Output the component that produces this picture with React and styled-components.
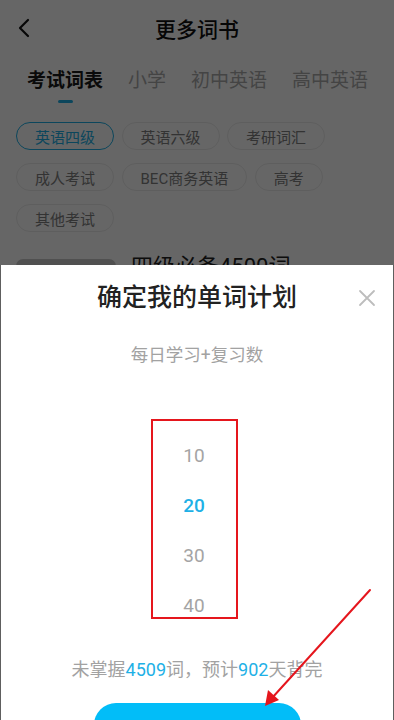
import React from "react";
import styled, { createGlobalStyle } from "styled-components";

const Global = createGlobalStyle`
  html, body { margin: 0; padding: 0; width: 394px; height: 720px; overflow: hidden; background: #fff; }
  body { font-family: Roboto, "Noto Sans CJK SC", "Noto Sans", sans-serif; }
  * { box-sizing: border-box; }
`;

const Page = styled.div`
  width: 394px;
  height: 720px;
  background: #fff;
  display: flex;
  flex-direction: column;
`;

const Header = styled.div`
  height: 56px;
  flex-shrink: 0;
  display: flex;
  align-items: center;
  justify-content: center;
  position: relative;
`;

const BackBtn = styled.div`
  position: absolute;
  left: 14px;
  top: 16px;
  width: 20px;
  height: 24px;
  display: flex;
  align-items: center;
  justify-content: center;
`;

const HeaderTitle = styled.div`
  font-size: 21px;
  font-weight: 500;
  color: #111;
`;

const Tabs = styled.div`
  display: flex;
  align-items: flex-start;
  padding: 12px 0 0 27px;
  gap: 25px;
  flex-shrink: 0;
`;

const Tab = styled.div`
  display: flex;
  flex-direction: column;
  align-items: center;
  font-size: 19px;
  line-height: 26px;
  font-weight: ${(p) => (p.$active ? 600 : 400)};
  color: ${(p) => (p.$active ? "#1a1a1a" : "#ababab")};
  white-space: nowrap;
`;

const Indicator = styled.div`
  margin-top: 6px;
  width: 15px;
  height: 3px;
  border-radius: 2px;
  background: ${(p) => (p.$show ? "#1eb0e6" : "transparent")};
`;

const Chips = styled.div`
  display: flex;
  flex-wrap: wrap;
  padding: 19px 16px 0;
  row-gap: 13px;
  column-gap: 7.5px;
  flex-shrink: 0;
`;

const Chip = styled.div`
  height: 28px;
  padding: 0 18px;
  border-radius: 14px;
  border: 1.5px solid ${(p) => (p.$active ? "#1eb0e6" : "#ececec")};
  color: ${(p) => (p.$active ? "#1eb0e6" : "#808080")};
  font-size: 15px;
  display: flex;
  align-items: center;
  justify-content: center;
  white-space: nowrap;
`;

const BookRow = styled.div`
  display: flex;
  gap: 15px;
  padding: 27px 16px 0;
  flex-shrink: 0;
`;

const Thumb = styled.div`
  width: 100px;
  height: 130px;
  border-radius: 7px;
  background: #c9c9c9;
`;

const BookName = styled.div`
  font-size: 22px;
  color: #222;
  line-height: 26px;
  margin-top: -5px;
`;

const Overlay = styled.div`
  position: fixed;
  inset: 0;
  background: rgba(0, 0, 0, 0.6);
  display: flex;
  flex-direction: column;
`;

const Spacer = styled.div`
  flex: 0 0 265px;
`;

const Sheet = styled.div`
  flex: 1;
  background: #fff;
  border-left: 1.5px solid #5e5e5e;
  border-right: 1.5px solid #5e5e5e;
  display: flex;
  flex-direction: column;
  align-items: center;
  position: relative;
  overflow: hidden;
  padding-top: 18px;
  & > * { flex-shrink: 0; }
`;

const SheetTitle = styled.div`
  font-size: 25px;
  line-height: 30px;
  color: #222;
  font-weight: 500;
`;

const CloseBtn = styled.div`
  position: absolute;
  right: 17px;
  top: 24px;
  width: 18px;
  height: 18px;
`;

const SubTitle = styled.div`
  margin-top: 30px;
  font-size: 17.5px;
  line-height: 24px;
  color: #a2a2a2;
`;

const Picker = styled.div`
  margin: 52px 6px 0 0;
  width: 87px;
  height: 200px;
  border: 2px solid #e5161d;
  padding-top: 9px;
  display: flex;
  flex-direction: column;
  align-items: center;
  overflow: hidden;
`;

const PickItem = styled.div`
  height: 50px;
  flex: 0 0 50px;
  display: flex;
  align-items: center;
  justify-content: center;
  font-family: Roboto, "Noto Sans", sans-serif;
  font-size: 19px;
  font-weight: ${(p) => (p.$active ? 500 : 400)};
  color: ${(p) => (p.$active ? "#1eb0e6" : "#a4a4a4")};
`;

const Summary = styled.div`
  margin-top: 39px;
  font-size: 18px;
  line-height: 24px;
  color: #a2a2a2;
`;

const Num = styled.span`
  color: #1eb0e6;
  font-family: Roboto, "Noto Sans", sans-serif;
`;

const ConfirmBtn = styled.div`
  margin-top: 21px;
  width: 207px;
  height: 46px;
  border-radius: 22px;
  background: #02bdf8;
`;

const Arrow = styled.svg`
  position: absolute;
  left: 0;
  top: 0;
  pointer-events: none;
`;

export default function App() {
  const tabs = ["考试词表", "小学", "初中英语", "高中英语"];
  const chips = ["英语四级", "英语六级", "考研词汇", "成人考试", "BEC商务英语", "高考", "其他考试"];
  const nums = [10, 20, 30, 40];
  return (
    <>
      <Global />
      <Page>
        <Header>
          <BackBtn>
            <svg width="12" height="20" viewBox="0 0 12 20">
              <path d="M10 2 L2 10 L10 18" fill="none" stroke="#111" strokeWidth="2.2" strokeLinecap="round" strokeLinejoin="round" />
            </svg>
          </BackBtn>
          <HeaderTitle>更多词书</HeaderTitle>
        </Header>
        <Tabs>
          {tabs.map((t, i) => (
            <Tab key={t} $active={i === 0}>
              {t}
              <Indicator $show={i === 0} />
            </Tab>
          ))}
        </Tabs>
        <Chips>
          {chips.map((c, i) => (
            <Chip key={c} $active={i === 0}>{c}</Chip>
          ))}
        </Chips>
        <BookRow>
          <Thumb />
          <BookName>四级必备4500词</BookName>
        </BookRow>
      </Page>
      <Overlay>
        <Spacer />
        <Sheet>
          <SheetTitle>确定我的单词计划</SheetTitle>
          <CloseBtn>
            <svg width="18" height="18" viewBox="0 0 18 18">
              <path d="M2 2 L16 16 M16 2 L2 16" stroke="#bdbdbd" strokeWidth="1.8" strokeLinecap="round" />
            </svg>
          </CloseBtn>
          <SubTitle>每日学习+复习数</SubTitle>
          <Picker>
            {nums.map((n) => (
              <PickItem key={n} $active={n === 20}>{n}</PickItem>
            ))}
          </Picker>
          <Summary>
            未掌握<Num>4509</Num>词，预计<Num>902</Num>天背完
          </Summary>
          <ConfirmBtn />
        </Sheet>
        <Arrow width="394" height="720" viewBox="0 0 394 720">
          <line x1="370" y1="590" x2="272" y2="698" stroke="#e5161d" strokeWidth="2" strokeLinecap="round" />
          <path d="M265 706 L268 690 L279 700 Z" fill="#e5161d" />
        </Arrow>
      </Overlay>
    </>
  );
}
